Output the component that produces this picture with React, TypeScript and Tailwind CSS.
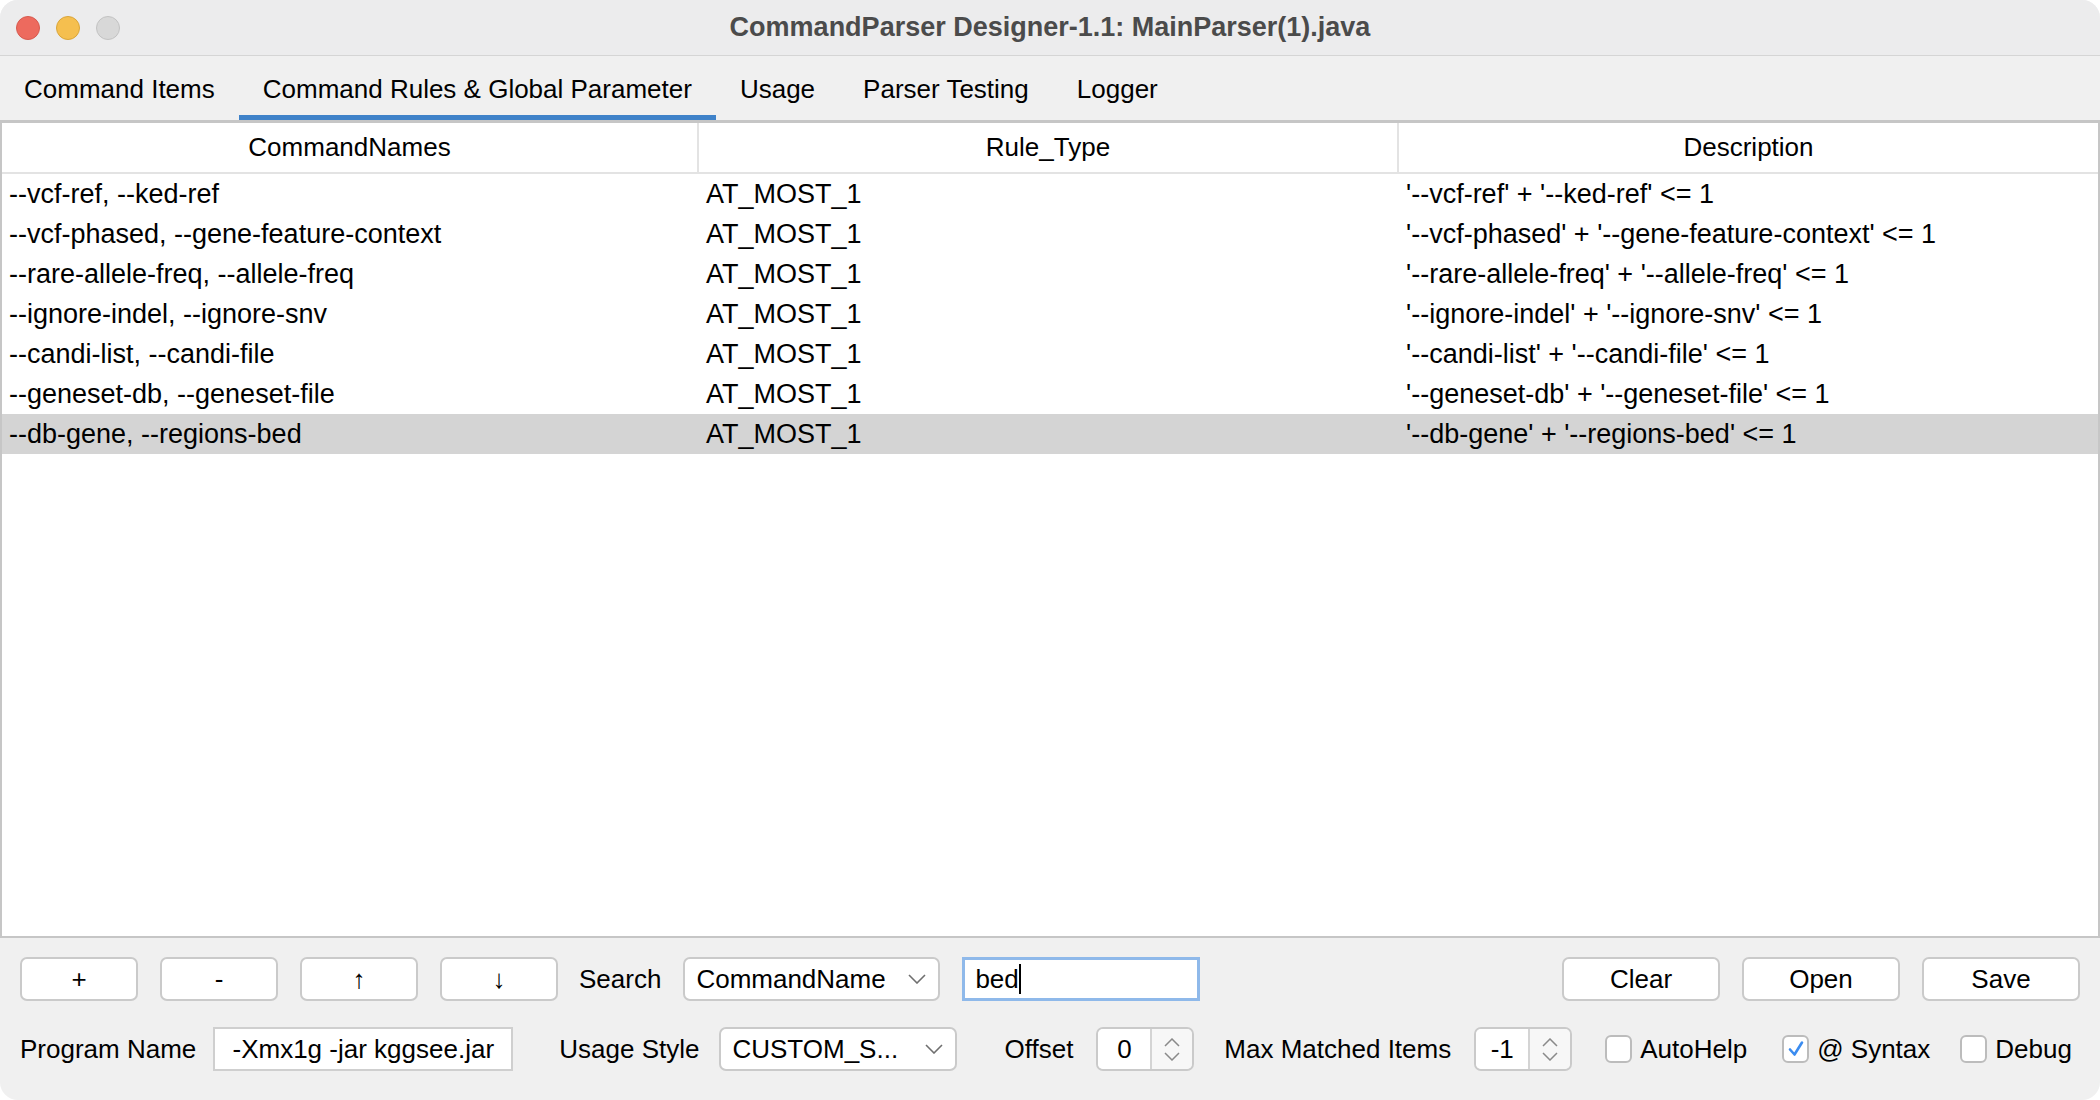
import React from 'react';

interface RuleRow {
  names: string;
  ruleType: string;
  description: string;
}

const rules: RuleRow[] = [
  { names: '--vcf-ref, --ked-ref', ruleType: 'AT_MOST_1', description: "'--vcf-ref' + '--ked-ref' <= 1" },
  { names: '--vcf-phased, --gene-feature-context', ruleType: 'AT_MOST_1', description: "'--vcf-phased' + '--gene-feature-context' <= 1" },
  { names: '--rare-allele-freq, --allele-freq', ruleType: 'AT_MOST_1', description: "'--rare-allele-freq' + '--allele-freq' <= 1" },
  { names: '--ignore-indel, --ignore-snv', ruleType: 'AT_MOST_1', description: "'--ignore-indel' + '--ignore-snv' <= 1" },
  { names: '--candi-list, --candi-file', ruleType: 'AT_MOST_1', description: "'--candi-list' + '--candi-file' <= 1" },
  { names: '--geneset-db, --geneset-file', ruleType: 'AT_MOST_1', description: "'--geneset-db' + '--geneset-file' <= 1" },
  { names: '--db-gene, --regions-bed', ruleType: 'AT_MOST_1', description: "'--db-gene' + '--regions-bed' <= 1" },
];

const tabs = ['Command Items', 'Command Rules & Global Parameter', 'Usage', 'Parser Testing', 'Logger'];

function Chevron() {
  return (
    <svg width="18" height="10" viewBox="0 0 18 10" className="shrink-0">
      <polyline points="1,1 9,9 17,1" fill="none" stroke="#6f6f6f" strokeWidth="1.6" />
    </svg>
  );
}

function PushButton({ label, width }: { label: string; width: string }) {
  return (
    <button
      className={`${width} h-[44px] shrink-0 bg-white border-2 border-[#cacaca] rounded-[7px] flex items-center justify-center text-black`}
    >
      {label}
    </button>
  );
}

function Combo({ value, width }: { value: string; width: string }) {
  return (
    <div
      className={`${width} h-[44px] shrink-0 bg-white border-2 border-[#cacaca] rounded-[7px] flex items-center justify-between pl-[11px] pr-[12px]`}
    >
      <span className="whitespace-nowrap">{value}</span>
      <Chevron />
    </div>
  );
}

function Spinner({ value }: { value: string }) {
  return (
    <div className="w-[98px] h-[44px] shrink-0 border-2 border-[#cacaca] rounded-[7px] flex overflow-hidden">
      <div className="flex-1 bg-white flex items-center justify-center">{value}</div>
      <div className="w-[42px] bg-[#f7f7f7] border-l-2 border-[#d4d4d4] flex flex-col items-center justify-center gap-[5px]">
        <svg width="16" height="9" viewBox="0 0 16 9">
          <polyline points="1,8 8,1 15,8" fill="none" stroke="#8a8a8a" strokeWidth="1.5" />
        </svg>
        <svg width="16" height="9" viewBox="0 0 16 9">
          <polyline points="1,1 8,8 15,1" fill="none" stroke="#8a8a8a" strokeWidth="1.5" />
        </svg>
      </div>
    </div>
  );
}

function CheckBox({ label, checked, className }: { label: string; checked?: boolean; className?: string }) {
  return (
    <div className={`flex items-center shrink-0 ${className ?? ''}`}>
      <div className="w-[27px] h-[28px] bg-white border-2 border-[#bcbcbc] rounded-[6px] flex items-center justify-center">
        {checked && (
          <svg width="18" height="18" viewBox="0 0 18 18">
            <polyline points="3,9.5 7.5,14.5 15,2.5" fill="none" stroke="#3b8cf0" strokeWidth="2.6" strokeLinecap="round" strokeLinejoin="round" />
          </svg>
        )}
      </div>
      <span className="ml-[8px] whitespace-nowrap">{label}</span>
    </div>
  );
}

export default function App() {
  return (
    <div className="w-[2100px] h-[1100px] bg-white font-[family-name:Liberation_Sans,Arial,sans-serif] text-[26px] text-black whitespace-nowrap">
      <div className="w-full h-full rounded-[18px] overflow-hidden flex flex-col bg-[#f0f0f0]">
        {/* Title bar */}
        <div className="h-[56px] shrink-0 bg-[#ececed] border-b border-[#d5d5d5] grid grid-cols-[1fr_auto_1fr] items-center">
          <div className="flex items-center gap-[16px] pl-[16px]">
            <span className="w-[24px] h-[24px] rounded-full bg-[#ed6a5e] border border-[#d65a4f]" />
            <span className="w-[24px] h-[24px] rounded-full bg-[#f5bf4f] border border-[#d9a53a]" />
            <span className="w-[24px] h-[24px] rounded-full bg-[#d8d8d8] border border-[#c2c2c2]" />
          </div>
          <div className="font-bold text-[27px] text-[#4b4b4b]">CommandParser Designer-1.1: MainParser(1).java</div>
          <div />
        </div>

        {/* Tabs */}
        <div className="h-[67px] shrink-0 bg-[#f0f0f0] border-b-[3px] border-[#c6c6c6] flex">
          {tabs.map((t, i) => (
            <div
              key={t}
              className={`h-full flex items-center px-[24px] pt-[7px] border-b-[5px] ${i === 1 ? 'border-[#3f82c9]' : 'border-transparent'}`}
            >
              {t}
            </div>
          ))}
        </div>

        {/* Table */}
        <div className="flex-1 bg-white border-l-2 border-r-2 border-b-2 border-[#c6c6c6] flex flex-col">
          <div className="h-[51px] shrink-0 grid grid-cols-[697px_700px_1fr] border-b-2 border-[#e3e3e3]">
            <div className="flex items-center justify-center border-r-2 border-[#e3e3e3]">CommandNames</div>
            <div className="flex items-center justify-center border-r-2 border-[#e3e3e3]">Rule_Type</div>
            <div className="flex items-center justify-center">Description</div>
          </div>
          {rules.map((r, i) => (
            <div
              key={r.names}
              className={`h-[40px] shrink-0 grid grid-cols-[697px_700px_1fr] items-center text-[27px] ${i === rules.length - 1 ? 'bg-[#d4d4d4]' : ''}`}
            >
              <div className="pl-[7px]">{r.names}</div>
              <div className="pl-[7px]">{r.ruleType}</div>
              <div className="pl-[7px]">{r.description}</div>
            </div>
          ))}
        </div>

        {/* Bottom controls */}
        <div className="shrink-0 h-[162px] pt-[19px] px-[20px] flex flex-col gap-[26px]">
          <div className="h-[44px] flex items-center">
            <div className="flex items-center gap-[22px]">
              <PushButton label="+" width="w-[118px]" />
              <PushButton label="-" width="w-[118px]" />
              <PushButton label="↑" width="w-[118px]" />
              <PushButton label="↓" width="w-[118px]" />
            </div>
            <span className="ml-[21px]">Search</span>
            <div className="ml-[22px]">
              <Combo value="CommandName" width="w-[257px]" />
            </div>
            <div className="ml-[22px] w-[238px] h-[44px] shrink-0 bg-white border-[3px] border-[#8fb9ea] flex items-center pl-[10px]">
              <span>bed</span>
              <span className="w-[2px] h-[30px] bg-black" />
            </div>
            <div className="flex-1" />
            <div className="flex items-center gap-[22px]">
              <PushButton label="Clear" width="w-[158px]" />
              <PushButton label="Open" width="w-[158px]" />
              <PushButton label="Save" width="w-[158px]" />
            </div>
          </div>

          <div className="h-[44px] flex items-center">
            <span className="shrink-0">Program Name</span>
            <div className="ml-[17px] w-[300px] h-[44px] shrink-0 bg-white border-2 border-[#cfcfcf] flex items-center justify-center">
              -Xmx1g -jar kggsee.jar
            </div>
            <span className="ml-[46px] shrink-0">Usage Style</span>
            <div className="ml-[20px]">
              <Combo value="CUSTOM_S..." width="w-[238px]" />
            </div>
            <span className="ml-[47px] shrink-0">Offset</span>
            <div className="ml-[23px]">
              <Spinner value="0" />
            </div>
            <span className="ml-[30px] shrink-0">Max Matched Items</span>
            <div className="ml-[23px]">
              <Spinner value="-1" />
            </div>
            <CheckBox label="AutoHelp" className="ml-[33px]" />
            <CheckBox label="@ Syntax" checked className="ml-[35px]" />
            <CheckBox label="Debug" className="ml-[30px]" />
          </div>
        </div>
      </div>
    </div>
  );
}
